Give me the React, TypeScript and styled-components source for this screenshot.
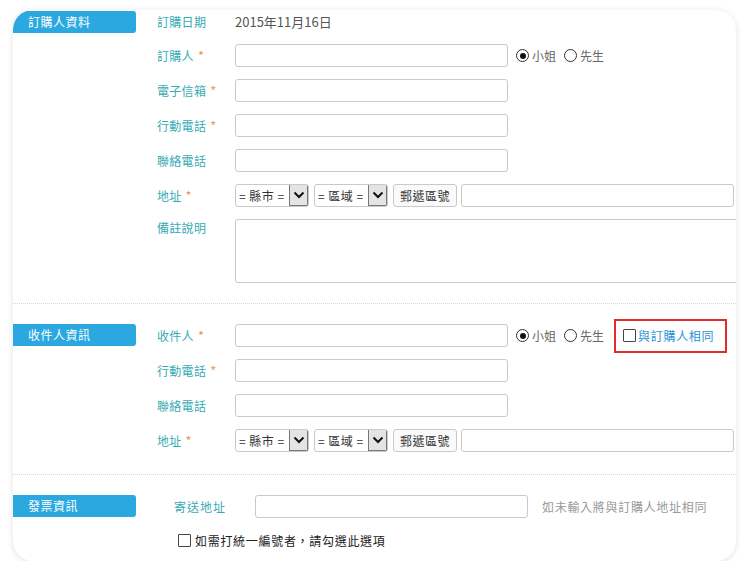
import React from "react";
import styled, { createGlobalStyle } from "styled-components";

const GlobalStyle = createGlobalStyle`
  html, body {
    margin: 0;
    padding: 0;
    background: #fff;
  }
  body {
    font-family: "Noto Sans CJK TC", "Noto Sans", sans-serif;
    font-size: 12px;
    color: #333;
  }
`;

const Chevron = () => (
  <svg width="12" height="8" viewBox="0 0 12 8">
    <path d="M1.5 1.5 L6 6 L10.5 1.5" fill="none" stroke="#111" strokeWidth="2" />
  </svg>
);

const Radio = ({ checked, label }: { checked?: boolean; label: string }) => (
  <RadioItem>
    <RadioDot checked={checked} />
    <RadioText>{label}</RadioText>
  </RadioItem>
);

const AddressRow = () => (
  <Row>
    <Label>
      地址<Star>*</Star>
    </Label>
    <SelectBox>
      <SelectText>= 縣市 =</SelectText>
      <ArrowBox>
        <Chevron />
      </ArrowBox>
    </SelectBox>
    <SelectBox>
      <SelectText>= 區域 =</SelectText>
      <ArrowBox>
        <Chevron />
      </ArrowBox>
    </SelectBox>
    <ZipButton>郵遞區號</ZipButton>
    <Input w={273} />
  </Row>
);

const App = () => {
  return (
    <>
      <GlobalStyle />
      <Card>
        <Section top={1} bottom={20}>
          <Tab>訂購人資料</Tab>
          <Fields>
            <Row h={21}>
              <Label>訂購日期</Label>
              <DateText>2015年11月16日</DateText>
            </Row>
            <Row>
              <Label>
                訂購人<Star>*</Star>
              </Label>
              <Input w={273} />
              <RadioGroup>
                <Radio checked label="小姐" />
                <Radio label="先生" />
              </RadioGroup>
            </Row>
            <Row>
              <Label>
                電子信箱<Star>*</Star>
              </Label>
              <Input w={273} />
            </Row>
            <Row>
              <Label>
                行動電話<Star>*</Star>
              </Label>
              <Input w={273} />
            </Row>
            <Row>
              <Label>聯絡電話</Label>
              <Input w={273} />
            </Row>
            <AddressRow />
            <TextRow>
              <Label>備註說明</Label>
              <TextArea />
            </TextRow>
          </Fields>
        </Section>
        <Divider />
        <Section top={20} bottom={22}>
          <Tab>收件人資訊</Tab>
          <Fields>
            <Row>
              <Label>
                收件人<Star>*</Star>
              </Label>
              <Input w={273} />
              <RadioGroup>
                <Radio checked label="小姐" />
                <Radio label="先生" />
              </RadioGroup>
              <SameBox>
                <Check />
                <SameText>與訂購人相同</SameText>
              </SameBox>
            </Row>
            <Row>
              <Label>
                行動電話<Star>*</Star>
              </Label>
              <Input w={273} />
            </Row>
            <Row>
              <Label>聯絡電話</Label>
              <Input w={273} />
            </Row>
            <AddressRow />
          </Fields>
        </Section>
        <Divider />
        <Section top={20} bottom={0}>
          <Tab>發票資訊</Tab>
          <InvoiceFields>
            <Row>
              <InvoiceLabel>寄送地址</InvoiceLabel>
              <Input w={273} />
              <Hint>如未輸入將與訂購人地址相同</Hint>
            </Row>
            <TaxRow>
              <Check />
              <TaxText>如需打統一編號者，請勾選此選項</TaxText>
            </TaxRow>
          </InvoiceFields>
        </Section>
      </Card>
    </>
  );
};

export default App;

const Card = styled.div`
  margin: 10px 0 0 13px;
  width: 723px;
  height: 551px;
  box-sizing: border-box;
  background: #fff;
  border-radius: 20px;
  box-shadow: 0 1px 6px rgba(0, 0, 0, 0.12);
  overflow: hidden;
`;

const Section = styled.div<{ top: number; bottom: number }>`
  display: flex;
  align-items: flex-start;
  padding-top: ${(p) => p.top}px;
  padding-bottom: ${(p) => p.bottom}px;
`;

const Tab = styled.div`
  flex: 0 0 123px;
  height: 22px;
  box-sizing: border-box;
  padding-left: 15px;
  background: #2aa8df;
  color: #fff;
  font-size: 12px;
  line-height: 22px;
  letter-spacing: 0.5px;
  border-radius: 0 3px 3px 0;
`;

const Fields = styled.div`
  display: flex;
  flex-direction: column;
  gap: 12px;
  margin-left: 21px;
  flex: 1;
`;

const InvoiceFields = styled(Fields)`
  margin-left: 38px;
  gap: 16px;
`;

const Row = styled.div<{ h?: number }>`
  display: flex;
  align-items: center;
  height: ${(p) => p.h ?? 23}px;
  white-space: nowrap;
`;

const TextRow = styled.div`
  display: flex;
  align-items: flex-start;
`;

const Label = styled.div`
  flex: 0 0 78px;
  color: #36aab5;
  font-size: 12px;
  letter-spacing: 0.3px;
`;

const InvoiceLabel = styled(Label)`
  flex: 0 0 81px;
  letter-spacing: 1px;
`;

const Star = styled.span`
  color: #f39a4c;
  margin-left: 4px;
  font-size: 13px;
`;

const DateText = styled.div`
  color: #555;
  font-size: 13px;
`;

const Input = styled.div<{ w: number }>`
  width: ${(p) => p.w}px;
  height: 23px;
  flex: 0 0 auto;
  box-sizing: border-box;
  border: 1px solid #c9c9c9;
  border-radius: 3px;
  background: #fff;
`;

const TextArea = styled.div`
  width: 540px;
  height: 64px;
  flex: 0 0 auto;
  box-sizing: border-box;
  border: 1px solid #c9c9c9;
  border-radius: 3px;
  background: #fff;
`;

const RadioGroup = styled.div`
  display: flex;
  align-items: center;
  gap: 8px;
  margin-left: 8px;
`;

const RadioItem = styled.div`
  display: flex;
  align-items: center;
  gap: 3px;
`;

const RadioDot = styled.span<{ checked?: boolean }>`
  width: 13px;
  height: 13px;
  box-sizing: border-box;
  border: 1px solid #333;
  border-radius: 50%;
  background: #fff;
  display: flex;
  align-items: center;
  justify-content: center;
  &::after {
    content: "";
    width: 6px;
    height: 6px;
    border-radius: 50%;
    background: ${(p) => (p.checked ? "#111" : "transparent")};
  }
`;

const RadioText = styled.span`
  color: #666;
  font-size: 12px;
`;

const SameBox = styled.div`
  display: flex;
  align-items: center;
  gap: 2px;
  height: 34px;
  box-sizing: border-box;
  margin-left: 10px;
  padding: 0 11px 0 7px;
  border: 2px solid #e42a2a;
`;

const SameText = styled.span`
  color: #2a8fd4;
  font-size: 12px;
  letter-spacing: 0.7px;
`;

const Check = styled.span`
  width: 13px;
  height: 13px;
  box-sizing: border-box;
  border: 1px solid #444;
  border-radius: 1px;
  background: #fff;
  flex: 0 0 auto;
`;

const SelectBox = styled.div`
  display: flex;
  align-items: stretch;
  width: 74px;
  height: 23px;
  box-sizing: border-box;
  border: 1px solid #c9c9c9;
  border-radius: 3px;
  margin-right: 5px;
  background: #fff;
  overflow: hidden;
`;

const SelectText = styled.span`
  flex: 1;
  padding-left: 3px;
  line-height: 21px;
  font-size: 12px;
  color: #333;
  letter-spacing: 0.5px;
`;

const ArrowBox = styled.span`
  width: 17px;
  display: flex;
  align-items: center;
  justify-content: center;
  background: #e4e4e4;
  border-left: 1px solid #777;
  border-right: 1px solid #777;
  border-bottom: 1px solid #777;
`;

const ZipButton = styled.div`
  width: 64px;
  height: 23px;
  box-sizing: border-box;
  border: 1px solid #c9c9c9;
  border-radius: 3px;
  background: #fafafa;
  font-size: 12px;
  color: #333;
  line-height: 21px;
  text-align: center;
  margin-right: 4px;
  letter-spacing: 0.5px;
`;

const Divider = styled.div`
  border-top: 1px dotted #d6d6d6;
`;

const Hint = styled.span`
  margin-left: 14px;
  color: #999;
  font-size: 12px;
  letter-spacing: 0.7px;
`;

const TaxRow = styled.div`
  display: flex;
  align-items: center;
  gap: 4px;
  padding-left: 4px;
  height: 13px;
`;

const TaxText = styled.span`
  color: #222;
  font-size: 12px;
  letter-spacing: 0.7px;
`;
